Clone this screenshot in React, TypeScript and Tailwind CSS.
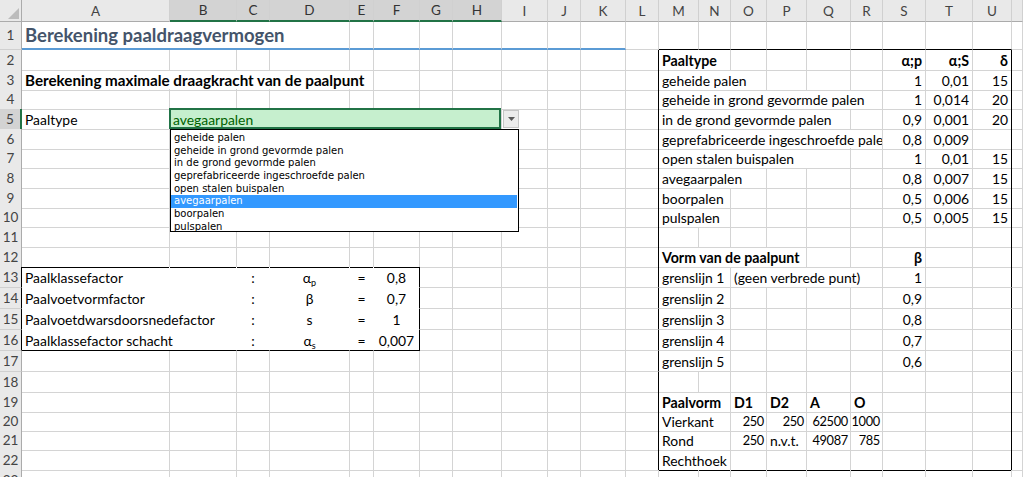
import React from "react";

type Cell = {
  c: number;
  span?: number;
  t: React.ReactNode;
  a?: "l" | "r" | "c";
  b?: boolean;
  cls?: string;
};

const GRID =
  "grid grid-cols-[22px_148px_67px_33px_80px_24px_46px_33px_49px_46px_33px_45px_33px_40px_32px_36px_40px_44px_32px_43px_47px_39px_11px]";

const COLS = ["A", "B", "C", "D", "E", "F", "G", "H", "I", "J", "K", "L", "M", "N", "O", "P", "Q", "R", "S", "T", "U", ""];

const ROW_H = [
  "",
  "h-[28px]",
  "h-[20px]", "h-[19px]", "h-[20px]", "h-[20px]", "h-[19px]", "h-[20px]",
  "h-[20px]", "h-[19px]", "h-[20px]", "h-[20px]", "h-[20px]",
  "h-[21px]", "h-[21px]", "h-[21px]", "h-[21px]", "h-[21px]",
  "h-[20px]", "h-[19px]", "h-[19px]", "h-[20px]", "h-[20px]", "h-[20px]",
];

const SPAN = ["", "", "col-span-2", "col-span-3", "col-span-4", "col-span-5", "col-span-6", "col-span-7"];

const ALIGN = { l: "justify-start", r: "justify-end", c: "justify-center" };

const AlphaSub = ({ s }: { s: string }) => (
  <span>
    α<sub className="text-[9px]">{s}</sub>
  </span>
);

const num = (c: number, t: string): Cell => ({ c, t, a: "r" });
// narrow numeric cells in the Paalvorm block
const tight = (c: number, t: string): Cell => ({ c, t, a: "r", cls: "overflow-visible pr-[2px] text-[12.8px] tracking-[-0.3px]" });

const ROWS: Record<number, Cell[]> = {
  1: [{ c: 0, span: 4, t: "Berekening paaldraagvermogen" }],
  2: [
    { c: 12, span: 2, t: "Paaltype", b: true },
    { c: 18, t: "α;p", a: "r", b: true },
    { c: 19, t: "α;S", a: "r", b: true },
    { c: 20, t: "δ", a: "r", b: true },
  ],
  3: [
    { c: 0, span: 5, t: "Berekening maximale draagkracht van de paalpunt", b: true, cls: "text-[15.2px]" },
    { c: 12, span: 3, t: "geheide palen" },
    num(18, "1"), num(19, "0,01"), num(20, "15"),
  ],
  4: [
    { c: 12, span: 6, t: "geheide in grond gevormde palen" },
    num(18, "1"), num(19, "0,014"), num(20, "20"),
  ],
  5: [
    { c: 0, t: "Paaltype" },
    { c: 1, span: 7, t: "avegaarpalen" },
    { c: 12, span: 5, t: "in de grond gevormde palen" },
    num(18, "0,9"), num(19, "0,001"), num(20, "20"),
  ],
  6: [
    { c: 12, span: 6, t: "geprefabriceerde ingeschroefde palen" },
    num(18, "0,8"), num(19, "0,009"),
  ],
  7: [
    { c: 12, span: 5, t: "open stalen buispalen" },
    num(18, "1"), num(19, "0,01"), num(20, "15"),
  ],
  8: [
    { c: 12, span: 3, t: "avegaarpalen" },
    num(18, "0,8"), num(19, "0,007"), num(20, "15"),
  ],
  9: [
    { c: 12, span: 2, t: "boorpalen" },
    num(18, "0,5"), num(19, "0,006"), num(20, "15"),
  ],
  10: [
    { c: 12, span: 2, t: "pulspalen" },
    num(18, "0,5"), num(19, "0,005"), num(20, "15"),
  ],
  12: [
    { c: 12, span: 4, t: "Vorm van de paalpunt", b: true },
    { c: 18, t: "β", a: "r", b: true },
  ],
  13: [
    { c: 0, t: "Paalklassefactor" },
    { c: 2, t: ":", a: "c" },
    { c: 3, t: <AlphaSub s="p" />, a: "c" },
    { c: 4, t: "=", a: "c" },
    { c: 5, t: "0,8", a: "c" },
    { c: 12, span: 2, t: "grenslijn 1" },
    { c: 14, span: 4, t: "(geen verbrede punt)" },
    num(18, "1"),
  ],
  14: [
    { c: 0, t: "Paalvoetvormfactor" },
    { c: 2, t: ":", a: "c" },
    { c: 3, t: "β", a: "c" },
    { c: 4, t: "=", a: "c" },
    { c: 5, t: "0,7", a: "c" },
    { c: 12, span: 2, t: "grenslijn 2" },
    num(18, "0,9"),
  ],
  15: [
    { c: 0, span: 2, t: "Paalvoetdwarsdoorsnedefactor" },
    { c: 2, t: ":", a: "c" },
    { c: 3, t: "s", a: "c" },
    { c: 4, t: "=", a: "c" },
    { c: 5, t: "1", a: "c" },
    { c: 12, span: 2, t: "grenslijn 3" },
    num(18, "0,8"),
  ],
  16: [
    { c: 0, span: 2, t: "Paalklassefactor schacht" },
    { c: 2, t: ":", a: "c" },
    { c: 3, t: <AlphaSub s="s" />, a: "c" },
    { c: 4, t: "=", a: "c" },
    { c: 5, t: "0,007", a: "c" },
    { c: 12, span: 2, t: "grenslijn 4" },
    num(18, "0,7"),
  ],
  17: [{ c: 12, span: 2, t: "grenslijn 5" }, num(18, "0,6")],
  19: [
    { c: 12, span: 2, t: "Paalvorm", b: true },
    { c: 14, t: "D1", b: true },
    { c: 15, t: "D2", b: true },
    { c: 16, t: "A", b: true },
    { c: 17, t: "O", b: true },
  ],
  20: [
    { c: 12, span: 2, t: "Vierkant" },
    tight(14, "250"), tight(15, "250"), tight(16, "62500"), tight(17, "1000"),
  ],
  21: [
    { c: 12, span: 2, t: "Rond" },
    tight(14, "250"), { c: 15, t: "n.v.t." }, tight(16, "49087"), tight(17, "785"),
  ],
  22: [{ c: 12, span: 2, t: "Rechthoek" }],
};

const OPTIONS = [
  "geheide palen",
  "geheide in grond gevormde palen",
  "in de grond gevormde palen",
  "geprefabriceerde ingeschroefde palen",
  "open stalen buispalen",
  "avegaarpalen",
  "boorpalen",
  "pulspalen",
];

function rightColor(r: number, c: number) {
  if (r >= 2 && r <= 22 && (c === 11 || c === 20)) return "border-r-black";
  if (r >= 13 && r <= 16 && c === 5) return "border-r-black";
  if (r >= 13 && r <= 16 && c < 5) return "border-r-white";
  return "border-r-[#d4d4d4]";
}

function bottomColor(r: number, c: number) {
  if (r === 1 && c <= 10) return "border-b-2 border-b-[#5b9bd5]";
  if ((r === 1 || r === 22) && c >= 12 && c <= 20) return "border-b-black";
  if ((r === 12 || r === 16) && c <= 5) return "border-b-black";
  if (r >= 13 && r <= 15 && c <= 5) return "border-b-white";
  return "border-b-[#d4d4d4]";
}

function SheetRow({ r }: { r: number }) {
  const defs = ROWS[r] || [];
  const out: React.ReactNode[] = [];
  let c = 0;
  while (c < 22) {
    const d = defs.find((x) => x.c === c);
    const span = d?.span ?? 1;
    const last = c + span - 1;
    const isSel = r === 5 && c === 1;
    const isTitle = r === 1 && c === 0;
    out.push(
      <div
        key={c}
        className={`${SPAN[span]} relative flex items-end overflow-hidden whitespace-nowrap border-r border-b px-[3px] pb-[1px] leading-[17px] ${rightColor(r, last)} ${bottomColor(r, last)} ${d ? ALIGN[d.a ?? "l"] : ""} ${d?.b ? "font-bold text-[14.2px]" : ""} ${d?.cls ?? ""} ${isSel ? "bg-[#c6efce] text-[#006100] overflow-visible" : ""} ${isTitle ? "text-[18.5px] leading-[22px] font-bold text-[#44546a] pb-[2px]" : ""}`}
      >
        {d?.t}
        {isSel && <div className="absolute -left-[1px] -top-[1px] right-0 bottom-0 border-2 border-[#217346]" />}
      </div>
    );
    c += span;
  }
  const selRow = r === 5;
  const boxRow = r >= 13 && r <= 16;
  return (
    <div className={`${GRID} ${ROW_H[r]}`}>
      <div
        className={`flex items-center justify-center border-b border-b-[#d0d0d0] text-[13.5px] text-[#444] ${selRow ? "border-r-2 border-r-[#217346] bg-[#d3d3d3]" : "border-r bg-[#e9e9e9]"} ${boxRow ? "border-r-black" : selRow ? "" : "border-r-[#ababab]"}`}
      >
        {r}
      </div>
      {out}
    </div>
  );
}

export default function App() {
  const rows = Array.from({ length: 23 }, (_, i) => i + 1);
  return (
    <div className="relative h-[477px] w-[1023px] overflow-hidden bg-white font-['Lato','Open_Sans',sans-serif] text-[13.9px] text-black">
      <div className={`${GRID} h-[22px]`}>
        <div className="relative border-r border-b border-r-[#ababab] border-b-[#ababab] bg-[#e9e9e9]">
          <svg className="absolute right-[2px] bottom-[2px]" width="11" height="11" viewBox="0 0 11 11">
            <polygon points="11,0 11,11 0,11" fill="#bcbcbc" />
          </svg>
        </div>
        {COLS.map((l, i) => {
          const sel = i >= 1 && i <= 7;
          return (
            <div
              key={i}
              className={`flex items-center justify-center border-r border-r-[#d0d0d0] text-[13.5px] ${sel ? "border-b-2 border-b-[#217346] bg-[#d3d3d3] text-[#333]" : "border-b border-b-[#ababab] bg-[#e9e9e9] text-[#444]"}`}
            >
              {l}
            </div>
          );
        })}
      </div>

      {rows.map((r) => (
        <SheetRow key={r} r={r} />
      ))}

      {/* validation dropdown arrow */}
      <div className="absolute left-[503px] top-[110px] flex h-[18px] w-[16px] items-center justify-center border border-[#c6c6c6] bg-[#ececec]">
        <svg width="7" height="4" viewBox="0 0 7 4">
          <polygon points="0,0 7,0 3.5,4" fill="#595959" />
        </svg>
      </div>

      {/* validation list */}
      <div className="absolute left-[170px] top-[129px] h-[103px] w-[349px] border border-black bg-white pt-[2px] font-['DejaVu_Sans',sans-serif] text-[10px] text-black">
        {OPTIONS.map((o) => (
          <div
            key={o}
            className={`h-[12.7px] whitespace-nowrap pl-[3px] leading-[12.7px] ${o === "avegaarpalen" ? "mr-[1px] bg-[#3399ff] text-white" : ""}`}
          >
            {o}
          </div>
        ))}
      </div>
    </div>
  );
}
